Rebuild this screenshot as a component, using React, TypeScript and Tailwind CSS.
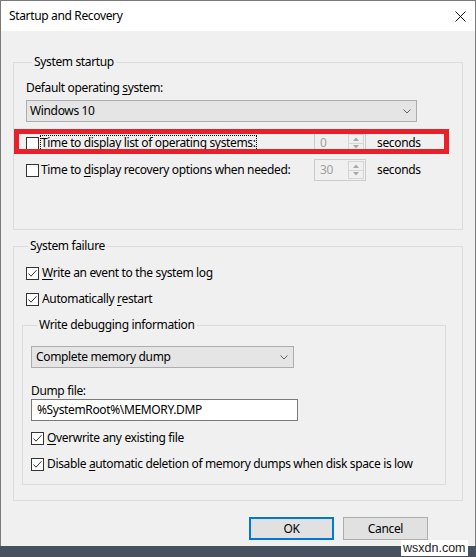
function Box({ checked }: { checked?: boolean }) {
  return (
    <span className="flex h-[13px] w-[13px] shrink-0 items-center justify-center border border-[#333333] bg-white">
      {checked && (
        <svg width="11" height="11" viewBox="0 0 11 11">
          <path d="M1.5 5.5 L4 8.2 L9.5 2.2" fill="none" stroke="#333333" strokeWidth="1" />
        </svg>
      )}
    </span>
  );
}

function Chevron() {
  return (
    <svg width="8" height="5" viewBox="0 0 8 5">
      <path d="M0.5 0.5 L4 4 L7.5 0.5" fill="none" stroke="#606060" strokeWidth="1" />
    </svg>
  );
}

function Spin({ value }: { value: string }) {
  return (
    <div className="flex h-[22px] w-[52px] border border-[#cccccc] bg-[#f0f0f0]">
      <span className="flex-1 pl-[5px] leading-[20px] text-[#a0a0a0]">{value}</span>
      <div className="my-[1px] mr-[1px] flex w-[16px] flex-col border border-[#d5d5d5]">
        <span className="flex flex-1 items-center justify-center border-b border-[#d5d5d5]">
          <svg width="6" height="4" viewBox="0 0 6 4">
            <path d="M0 4 L3 0.5 L6 4 Z" fill="#a8a8a8" />
          </svg>
        </span>
        <span className="flex flex-1 items-center justify-center">
          <svg width="6" height="4" viewBox="0 0 6 4">
            <path d="M0 0 L3 3.5 L6 0 Z" fill="#a8a8a8" />
          </svg>
        </span>
      </div>
    </div>
  );
}

function Check({ checked, children }: { checked?: boolean; children: React.ReactNode }) {
  return (
    <div className="flex h-[16px] items-center">
      <Box checked={checked} />
      <span className="ml-[3px]">{children}</span>
    </div>
  );
}

const legend = "ml-[6px] px-[2px] leading-[16px]";
const group = "border border-[#dcdcdc]";

export default function App() {
  return (
    <div className="relative h-[557px] w-[476px] overflow-hidden bg-[#46525e] font-['Noto_Sans',sans-serif] text-[12px] leading-[16px] tracking-[-0.35px] text-black">
      <div className="flex h-[546px] flex-col border-x border-t border-[#7a7a7a] bg-[#f0f0f0]">
        {/* Title bar */}
        <div className="flex h-[30px] items-center justify-between bg-white pl-[8px] pr-[9px]">
          <span className="text-[12px]">Startup and Recovery</span>
          <svg width="11" height="11" viewBox="0 0 11 11">
            <path d="M0.5 0.5 L10.5 10.5 M10.5 0.5 L0.5 10.5" stroke="#111111" strokeWidth="1" />
          </svg>
        </div>

        <div className="pl-[12px]">
          {/* System startup */}
          <fieldset className={`${group} mt-[23px] w-[450px] pb-[48px] pl-[12px]`}>
            <legend className={legend}>System startup</legend>
            <div className="mt-[10px]">
              Default operating <u className="underline-offset-2">s</u>ystem:
            </div>
            <div className="mt-[4px] flex h-[22px] w-[391px] items-center justify-between border border-[#adadad] bg-[#e5e5e5] pl-[3px] pr-[5px]">
              <span>Windows 10</span>
              <Chevron />
            </div>

            <div className="relative mt-[10px]">
              <div className="flex h-[22px] items-center">
                <div className="flex w-[288px] items-center">
                  <Box />
                  <span className="ml-[1px] border border-dotted border-black leading-[14px]">
                    <u className="underline-offset-2">T</u>ime to display list of operating systems:
                  </span>
                </div>
                <Spin value="0" />
                <span className="ml-[11px]">seconds</span>
              </div>
              <div className="mt-[5px] flex h-[22px] items-center">
                <div className="flex w-[288px] items-center">
                  <Box />
                  <span className="ml-[1px] border border-transparent leading-[14px]">
                    Time to <u className="underline-offset-2">d</u>isplay recovery options when needed:
                  </span>
                </div>
                <Spin value="30" />
                <span className="ml-[11px]">seconds</span>
              </div>
              {/* red highlight drawn over the first row */}
              <div className="absolute left-[-12px] top-[-3px] h-[25px] w-[435px] border-[5px] border-[#e8202a]" />
            </div>
          </fieldset>

          {/* System failure */}
          <fieldset className={`${group} mt-[8px] w-[450px] pb-[15px] pl-[8px]`}>
            <legend className={legend}>System failure</legend>
            <div className="mt-[11px] pl-[4px]">
              <Check checked>
                <u className="underline-offset-2">W</u>rite an event to the system log
              </Check>
              <div className="mt-[10px]">
                <Check checked>
                  Automatically <u className="underline-offset-2">r</u>estart
                </Check>
              </div>
            </div>

            <fieldset className={`${group} mt-[10px] w-[424px] pb-[12px] pl-[8px]`}>
              <legend className={legend}>Write debugging information</legend>
              <div className="mt-[13px] flex h-[22px] w-[263px] items-center justify-between border border-[#adadad] bg-[#e5e5e5] pl-[4px] pr-[5px]">
                <span>Complete memory dump</span>
                <Chevron />
              </div>
              <div className="mt-[15px]">Dump file:</div>
              <div className="flex h-[22px] w-[267px] items-center border border-[#7a7a7a] bg-white pl-[5px]">
                %SystemRoot%\MEMORY.DMP
              </div>
              <div className="mt-[9px]">
                <Check checked>
                  <u className="underline-offset-2">O</u>verwrite any existing file
                </Check>
              </div>
              <div className="mt-[10px]">
                <Check checked>
                  Disable <u className="underline-offset-2">a</u>utomatic deletion of memory dumps when disk space is low
                </Check>
              </div>
            </fieldset>
          </fieldset>
        </div>

        {/* Buttons */}
        <div className="mt-[16px] flex gap-[9px] pl-[248px]">
          <button className="h-[23px] w-[85px] border-2 border-[#0078d7] bg-[#e1e1e1]">OK</button>
          <button className="h-[23px] w-[85px] border border-[#adadad] bg-[#e1e1e1]">Cancel</button>
        </div>
      </div>

      {/* watermark */}
      <div className="absolute left-[401px] top-[540px] bg-white px-[2px] font-['Liberation_Sans',sans-serif] text-[12.5px] leading-[16px] tracking-normal text-[#222222]">
        wsxdn.com
      </div>
    </div>
  );
}
